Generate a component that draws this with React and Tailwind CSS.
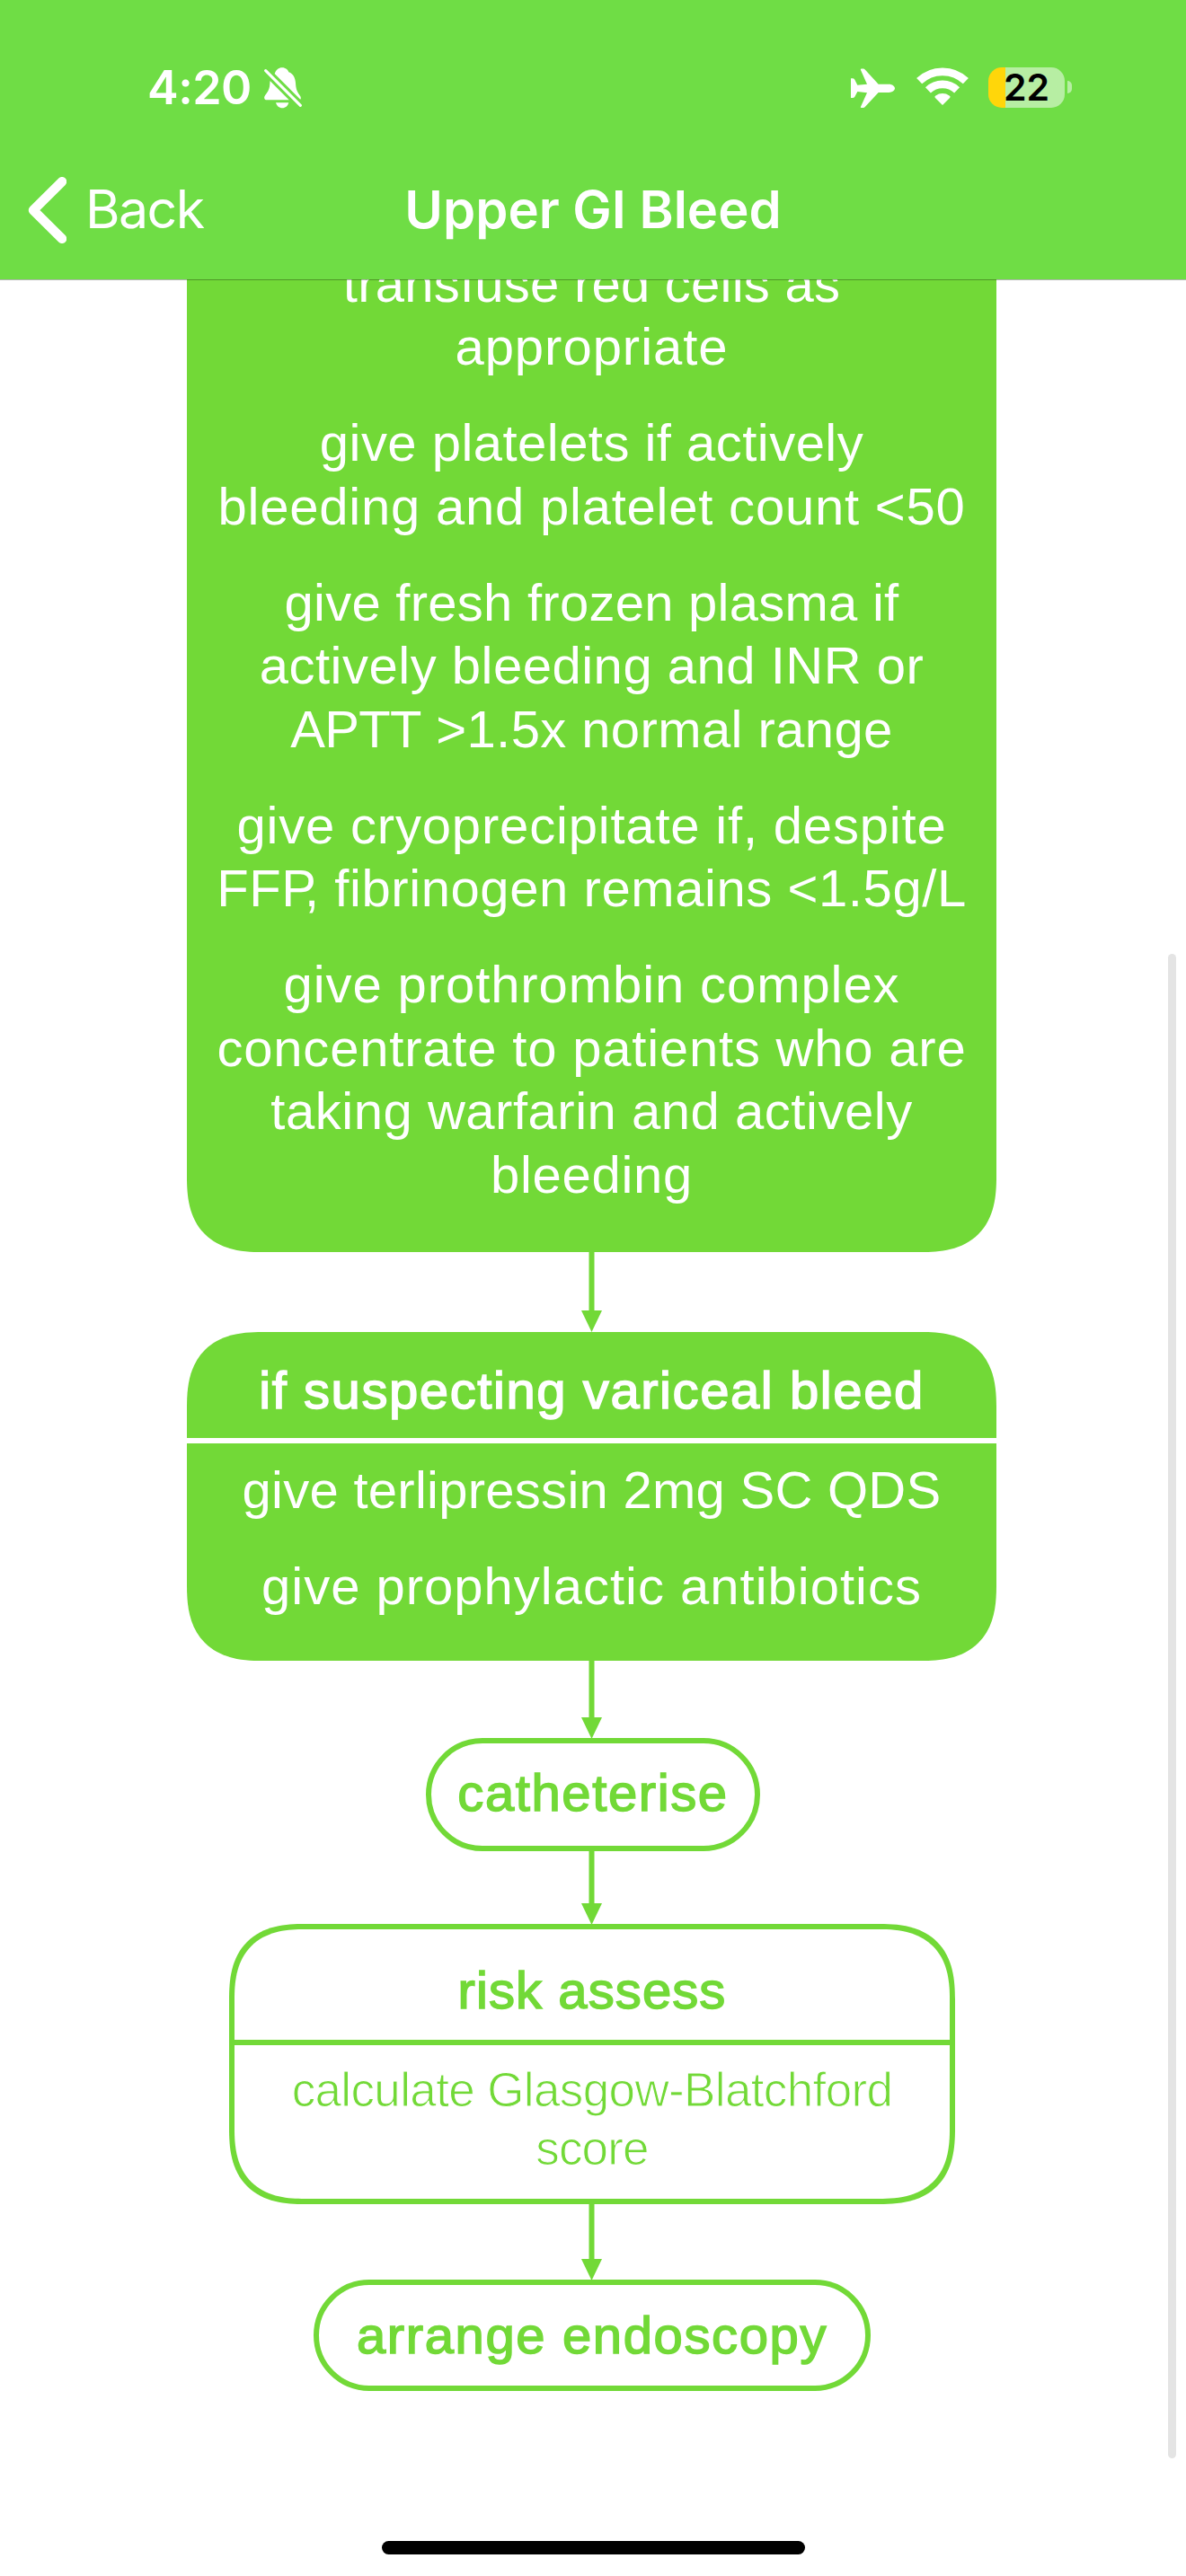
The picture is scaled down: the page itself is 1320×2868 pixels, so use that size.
const GREEN = "#72d937";

function BellOff() {
  return (
    <svg className="mt-[3px] ml-[14px] h-[46px] w-[43px]" viewBox="0 0 129 138">
      <mask id="bell-slash">
        <rect x="-4" y="-4" width="140" height="146" fill="white" />
        <path d="M-20 -14 L141 147" stroke="black" strokeWidth="28" />
      </mask>
      <g fill="white">
        <path
          mask="url(#bell-slash)"
          d="M35 21C40 8 48 1 60 1C72 1 79 8 82 16C98 22 104 36 105 52C106 72 109 80 118 92C125 101 124 109 114 109L10 109C-1 109 -2 99 4 92C14 80 18 72 19 55C20 40 22 30 35 21Z"
        />
        <path d="M39 118H82C79 129 71 136 60.500 136C50 136 42 129 39 118Z" />
      </g>
      <path d="M5 11L121 127" stroke="white" strokeWidth="9.500" strokeLinecap="round" />
    </svg>
  );
}

function Airplane() {
  return (
    <svg className="mt-[4px] h-[44px] w-[49px]" viewBox="0 0 147 132" fill="white">
      <path d="M35 1.500H41Q45 1.500 48 5L92 53H127C138 53 147 60 147 67C147 74 138 81 127 81H92L48 128Q45 132 41 132H35Q31 132 33 128L54 82L22 78L13 95Q10 99 6 99H0V34H6Q10 34 13 38L22 56L54 53L33 6Q31 1.500 35 1.500Z" />
    </svg>
  );
}

function Wifi() {
  return (
    <svg className="mt-[3px] ml-[24px] h-[42px] w-[58px]" viewBox="-87 -127 174 127">
      <g fill="none" stroke="white">
        <path d="M-78.200 -81A112.600 112.600 0 0 1 78.200 -81" strokeWidth="26.500" />
        <path d="M-48.600 -50.300A70 70 0 0 1 48.600 -50.300" strokeWidth="26" />
      </g>
      <path d="M0 0L-25 -25Q-28 -29 -23 -31.500A39 39 0 0 1 23 -31.500Q28 -29 25 -25Z" fill="white" />
    </svg>
  );
}

function Battery() {
  return (
    <div className="mt-[2px] ml-[22px] flex items-center">
      <div className="flex h-[45px] w-[85px] items-center justify-center rounded-[15px] bg-linear-to-r from-[#ffd60a] from-[19px] to-[#b7eea3] to-[19px] text-[41px] leading-none font-semibold text-black">
        22
      </div>
      <div className="ml-[3px] h-[14px] w-[5px] rounded-r-full bg-[#b7eea3]" />
    </div>
  );
}

function Header() {
  return (
    <header className="relative z-10 h-[311px] bg-[#6fdd45] font-['Inter',sans-serif] text-white">
      <div className="flex h-[195px] items-start justify-between pt-[72px] pr-[127px] pl-[164px]">
        <div className="flex">
          <span className="text-[52px] leading-none font-semibold tracking-[-0.5px]">4:20</span>
          <BellOff />
        </div>
        <div className="flex">
          <Airplane />
          <Wifi />
          <Battery />
        </div>
      </div>
      <div className="grid grid-cols-[1fr_auto_1fr] items-start">
        <div className="flex">
          <svg className="mt-[2px] ml-[31px] h-[74px] w-[43px]" viewBox="0 0 43 74" fill="none">
            <path d="M38 5.200L6 37L38 68.800" stroke="white" strokeWidth="10.500" strokeLinecap="round" strokeLinejoin="round" />
          </svg>
          <span className="mt-[8px] ml-[21px] text-[59px] leading-none tracking-[-1.6px]">Back</span>
        </div>
        <h1 className="mt-[9px] text-[58px] leading-none font-semibold">Upper GI Bleed</h1>
      </div>
      <div className="absolute inset-x-0 top-full h-px bg-black/30" />
    </header>
  );
}

function Arrow({ length }) {
  return (
    <svg className="block shrink-0 overflow-visible" width="23" height={length} fill={GREEN}>
      <rect x="8.500" width="6" y="-1" height={length - 20} />
      <path d={`M0 ${length - 24}H23L11.500 ${length}Z`} />
    </svg>
  );
}

const paragraphs = [
  [
    ["transfuse red cells as", "tracking-[0.24px]"],
    ["appropriate", "tracking-[0.98px]"],
  ],
  [
    ["give platelets if actively", "tracking-[0.47px]"],
    ["bleeding and platelet count <50", "tracking-[0.78px]"],
  ],
  [
    ["give fresh frozen plasma if", "tracking-[0.26px]"],
    ["actively bleeding and INR or", "tracking-[0.51px]"],
    [<><span className="tracking-[-0.7px]">APTT</span> &gt;1.5x normal range</>, "tracking-[0.4px]"],
  ],
  [
    ["give cryoprecipitate if, despite", "tracking-[0.81px]"],
    [<>FF<span className="tracking-[-13px]">P</span>, fibrinogen remains &lt;1.5g/L</>, "tracking-[0.58px]"],
  ],
  [
    ["give prothrombin complex", "tracking-[0.91px]"],
    ["concentrate to patients who are", "tracking-[0.8px]"],
    ["taking warfarin and actively", "tracking-[0.53px]"],
    ["bleeding", "tracking-[0.7px]"],
  ],
];

const medium = "[-webkit-text-stroke:1.6px_currentColor]";

export default function App() {
  return (
    <div className="relative h-[2868px] w-[1320px] overflow-hidden bg-white font-['Liberation_Sans',sans-serif]">
      <Header />
      <main className="-mt-[90px] flex w-[1317px] flex-col items-center text-center text-[58px] leading-[70.6px] whitespace-nowrap">
        <section className="flex h-[1173px] w-[901px] flex-col gap-[36.3px] rounded-[84px] bg-[#72d937] pt-[59.6px] text-white [corner-shape:superellipse(1.35)]">
          {paragraphs.map((lines, i) => (
            <p key={i}>
              {lines.map(([text, tracking], j) => (
                <span key={j} className={`block ${tracking}`}>{text}</span>
              ))}
            </p>
          ))}
        </section>
        <Arrow length={89} />
        <section className="h-[366px] w-[901px] rounded-[84px] bg-[#72d937] text-white [corner-shape:superellipse(1.35)]">
          <h2 className={`h-[118px] pt-[30px] tracking-[1.58px] ${medium}`}>if suspecting variceal bleed</h2>
          <div className="h-[6px] bg-white" />
          <div className="flex flex-col gap-[36.3px] pt-[17px]">
            <p className="tracking-[0.27px]">give terlipressin 2mg SC QDS</p>
            <p className="tracking-[1px]">give prophylactic antibiotics</p>
          </div>
        </section>
        <Arrow length={87} />
        <div className={`-mt-px ml-[3px] flex h-[126px] w-[372px] items-center justify-center rounded-full border-6 border-[#72d937] pb-[3px] tracking-[1.6px] text-[#72d937] ${medium}`}>
          catheterise
        </div>
        <Arrow length={82} />
        <section className="-mt-px ml-px h-[312px] w-[808px] rounded-[84px] border-6 border-[#72d937] text-[#72d937] [corner-shape:superellipse(1.35)]">
          <h2 className={`h-[129px] border-b-6 border-[#72d937] pt-[33px] tracking-[1.1px] ${medium}`}>risk assess</h2>
          <p className="pt-[17px] text-[53px] leading-[65px] [-webkit-text-stroke:1px_white]">
            <span className="block tracking-[-0.63px]">calculate Glasgow-Blatchford</span>
            <span className="block tracking-[-0.85px]">score</span>
          </p>
        </section>
        <Arrow length={85} />
        <div className={`-mt-px ml-px flex h-[124px] w-[620px] items-center justify-center rounded-full border-6 border-[#72d937] tracking-[1.62px] text-[#72d937] ${medium}`}>
          arrange endoscopy
        </div>
      </main>
      <div className="absolute top-[1062px] right-[11px] h-[1675px] w-[9px] rounded-full bg-[#e4e4e4]" />
      <div className="absolute bottom-[24px] left-[425px] h-[15px] w-[471px] rounded-full bg-black" />
    </div>
  );
}
